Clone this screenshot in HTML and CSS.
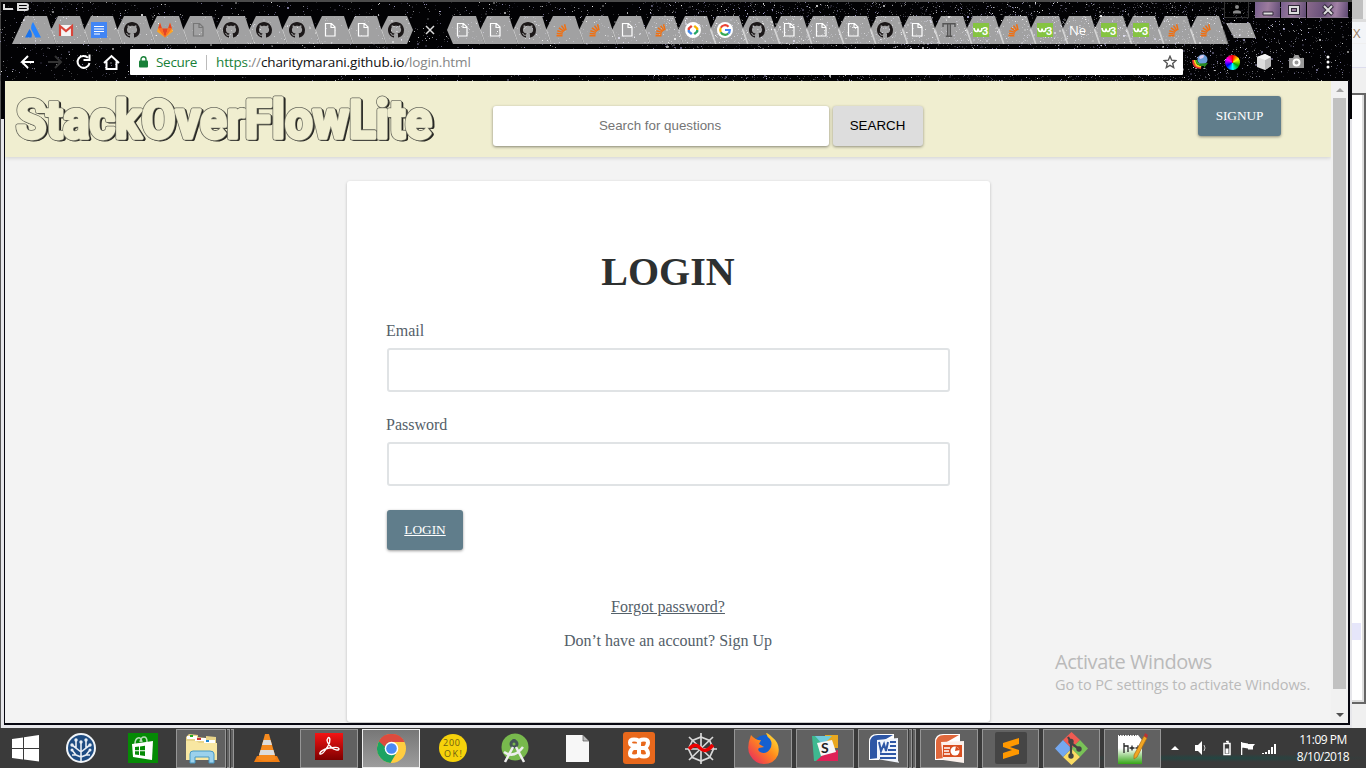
FILE: index.html
```html
<!DOCTYPE html>
<html lang="en">
<head>
<meta charset="utf-8">
<title>StackOverFlowLite - Login</title>
<link rel="stylesheet" href="styles.css">
</head>
<body>
<svg class="symbols" aria-hidden="true">
  <symbol id="github" viewBox="0 0 16 16"><path d="M8 0C3.58 0 0 3.58 0 8c0 3.54 2.29 6.53 5.47 7.59.4.07.55-.17.55-.38 0-.19-.01-.82-.01-1.49-2.01.37-2.53-.49-2.69-.94-.09-.23-.48-.94-.82-1.13-.28-.15-.68-.52-.01-.53.63-.01 1.08.58 1.23.82.72 1.21 1.87.87 2.33.66.07-.52.28-.87.51-1.07-1.78-.2-3.64-.89-3.64-3.95 0-.87.31-1.59.82-2.15-.08-.2-.36-1.02.08-2.12 0 0 .67-.21 2.2.82.64-.18 1.32-.27 2-.27s1.36.09 2 .27c1.53-1.04 2.2-.82 2.2-.82.44 1.1.16 1.92.08 2.12.51.56.82 1.27.82 2.15 0 3.07-1.87 3.75-3.65 3.95.29.25.54.73.54 1.48 0 1.07-.01 1.93-.01 2.2 0 .21.15.46.55.38A8.01 8.01 0 0 0 16 8c0-4.42-3.58-8-8-8z" fill="#1c1819"/></symbol>
  <symbol id="file" viewBox="0 0 16 16"><path d="M3.500 1.500h6l3.500 3.500v9h-9.500zM9 1.500v4h4" fill="none" stroke="#fff" stroke-width="1.200"/></symbol>
  <symbol id="filedark" viewBox="0 0 16 16"><path d="M3.500 1.500h6l3.500 3.500v9h-9.500zM9 1.500v4h4" fill="none" stroke="#777" stroke-width="1.200"/></symbol>
  <symbol id="so" viewBox="0 0 16 16"><path d="M3.500 13.800h6M3.700 11.400l6 .5M4.300 8.700l5.700 1.700M5.900 5.800l5 3.500M8.500 3.600l3.500 5M11.600 2.300l1.400 5.800" fill="none" stroke="#f07012" stroke-width="1.500"/></symbol>
  <symbol id="w3" viewBox="0 0 16 16"><rect y="1" width="16" height="14" fill="#85c441"/><path d="M1 6q.5 3.500 2.300 3.500T5 6.500q.2 3 2 3T9 6" fill="none" stroke="#fff" stroke-width="1.700"/></symbol>
  <symbol id="atlassian" viewBox="0 0 16 16"><path d="M4.500 7 0 15.500h6.500q1.500-4-2-8.500z" fill="#1872ec"/><path d="M8 0q-4 6 .3 11l2.200 4.500H16z" fill="#2684ff"/></symbol>
  <symbol id="gmail" viewBox="0 0 16 16"><path fill="#f5f5f5" d="M1 3h14v11H1z"/><path d="M2 14V4l6 5 6-5v10" fill="none" stroke="#d9453a" stroke-width="2.200"/></symbol>
  <symbol id="docs" viewBox="0 0 16 16"><path fill="#4285f4" d="M0 0h16v16H0z"/><path d="M3 4.500h10M3 7h10M3 9.500h10M3 12h6" stroke="#fff" stroke-width="1.200"/></symbol>
  <symbol id="gitlab" viewBox="0 0 16 16"><path fill="#fca326" d="m8 15.500-8-6 3-8.700 2 6h6l2-6 3 8.700z"/><path fill="#e24329" d="m8 15.500-3-9h6zM1 6.500 3 .8l2 5.700zM11 6.500l2-5.700 2 5.700z"/><path fill="#fc6d26" d="M1 6.500h4l3 9zM11 6.500h4l-7 9z"/></symbol>
  <symbol id="code" viewBox="0 0 16 16"><circle cx="8" cy="8" r="8" fill="#fff"/><g fill="none" stroke-width="2.300"><path d="M6.800 3.800 3.800 6.500V8" stroke="#e84436"/><path d="M3.800 8v1.500l3 2.700" stroke="#4387e8"/><path d="M9.200 3.800l3 2.700V8" stroke="#f4b400"/><path d="M12.200 8v1.500l-3 2.700" stroke="#24a765"/></g></symbol>
  <symbol id="google" viewBox="0 0 16 16"><circle cx="8" cy="8" r="8" fill="#fff"/><g fill="none" stroke-width="2.200"><path d="M11.500 4.700A4.800 4.800 0 0 0 3.800 5.800" stroke="#ea4335"/><path d="M3.800 5.800a4.800 4.800 0 0 0 0 4.400" stroke="#fbbc05"/><path d="M3.800 10.200a4.800 4.800 0 0 0 7.500 1.300" stroke="#34a853"/><path d="M11.300 11.500Q12.800 10.300 12.800 8H8" stroke="#4285f4"/></g></symbol>
  <symbol id="tee" viewBox="0 0 16 16"><path d="M2 5V1.800h12V5M6.700 2v12M9.300 2v12M4.800 14.200h6.400" fill="none" stroke="#555" stroke-width="1.400"/></symbol>
</svg>

<main class="desktop">
  <section class="window">
    <header class="chrome">
      <svg class="stars" id="stars" width="1352" height="79"></svg>
      <div class="caption">
        <svg class="badge" width="26" height="8" viewBox="0 0 26 8" fill="none" stroke="#ddd" stroke-width="2"><path d="M1 1v5h9M15 1h8q2 0 2 1.500T23 4h-8zm0 3h8q2 0 2 1.500T23 7h-8z"/></svg>
        <span class="user"><svg width="10" height="9"><circle cx="5" cy="2" r="2" fill="#888"/><path d="M1 8.500V6.500q4-2.500 8 0v2z" fill="#888"/></svg></span>
        <span class="wbtn"><svg width="12" height="12"><path d="M1 8h10v3H1z" fill="#ddd" stroke="#302838"/></svg></span>
        <span class="wbtn"><svg width="12" height="12"><path d="M2 3h8v6H2z" fill="none" stroke="#302838" stroke-width="4"/><path d="M2 3h8v6H2z" fill="none" stroke="#ddd" stroke-width="2"/></svg></span>
        <span class="wbtn close"><svg width="12" height="12"><path d="M1.500 1.500l9 9M10.500 1.500l-9 9" stroke="#302838" stroke-width="4"/><path d="M2 2l8 8M10 2l-8 8" stroke="#ddd" stroke-width="2"/></svg></span>
      </div>
      <nav class="tabs" id="tabs"></nav>
      <div class="toolbar">
        <svg class="navs" width="104" height="18" viewBox="0 0 104 18" fill="none" stroke="#fff" stroke-width="2">
          <path d="M16 9H4M10 3 4 9l6 6"/><path d="M30 9h13M37 3l6 6-6 6" stroke="#333"/>
          <path d="M70 4.800A6 6 0 1 0 71.500 10M71.500 1.500V7h-6"/><path d="M86 10 93.500 3l7.500 7M88.500 8.500V16h10V8.500"/>
        </svg>
        <div class="omnibox">
          <svg width="9" height="12" viewBox="0 0 9 12"><path d="M2 5V3.200a2.500 2.500 0 0 1 5 0V5" fill="none" stroke="#188038" stroke-width="1.400"/><rect y="4.500" width="9" height="7" rx="1" fill="#188038"/></svg>
          <span class="secure">Secure</span>
          <span class="url"><i class="scheme">https</i>://<b>charitymarani.github.io</b>/login.html</span>
          <svg class="fav" width="14" height="14" viewBox="0 0 14 14"><path d="M7 1.300l1.700 3.900 4.200.4-3.200 2.800 1 4.200L7 10.400l-3.700 2.200 1-4.200L1.100 5.600l4.200-.4z" fill="none" stroke="#555" stroke-width="1.400"/></svg>
        </div>
        <div class="extensions">
          <svg width="16" height="16" viewBox="0 0 16 16"><path d="M1 6q0 8 8 8" fill="none" stroke="#e33" stroke-width="1.800"/><path d="M2.700 6q0 6.500 6.500 6.500" fill="none" stroke="#fc2" stroke-width="1.800"/><path d="M4.400 6q0 4.500 5 4.500" fill="none" stroke="#3b3" stroke-width="1.800"/><circle cx="10.500" cy="5.500" r="5" fill="#6b9ed8"/><path d="M7 3q3-3 5-1.500 0 3-4 3.500z" fill="#dce"/><path d="M8 9.500l8-.5-4 5v-2H7z" fill="#2a8a20"/></svg>
          <span class="wheel"></span>
          <svg width="16" height="16" viewBox="0 0 16 16"><path d="M1 3l8-3 6 3v9l-6 4-8-3z" fill="#ddd"/><path d="M9 6l6-3v9l-6 4z" fill="#bbb"/><path d="M1 3l8-3 6 3-6 3z" fill="#f5f5f5"/></svg>
          <svg width="15" height="14" viewBox="0 0 15 14"><path d="M0 3h4l1.500-3h4L11 3h4v10H0z" fill="#999"/><circle cx="7.500" cy="7.500" r="3" fill="none" stroke="#fff" stroke-width="2"/></svg>
          <svg width="4" height="14" fill="#fff"><circle cx="2" cy="2" r="1.500"/><circle cx="2" cy="7" r="1.500"/><circle cx="2" cy="12" r="1.500"/></svg>
        </div>
      </div>
    </header>

    <div class="frame">
      <div class="viewport">
        <div class="page">
          <div class="site-header">
            <svg class="logo" width="440" height="66" role="img" aria-label="StackOverFlowLite" id="logo"></svg>
            <form class="search"><input type="text" placeholder="Search for questions"><button type="button" class="btn grey">SEARCH</button></form>
            <button class="btn signup">SIGNUP</button>
          </div>
          <div class="card">
            <h1>LOGIN</h1>
            <label>Email</label>
            <input type="text">
            <label>Password</label>
            <input type="password">
            <button class="btn login">LOGIN</button>
            <p class="forgot">Forgot password?</p>
            <p>Don’t have an account? Sign Up</p>
          </div>
        </div>
        <div class="scrollbar"><i class="up"></i><i class="thumb"></i><i class="down"></i></div>
      </div>
    </div>
    <aside class="activate"><div>Activate Windows</div><p>Go to PC settings to activate Windows.</p></aside>
  </section>
  <section class="behind">
    <div class="b-title"></div><div class="b-x">X</div><div class="b-bar"></div>
    <div class="b-pane"><i></i></div>
  </section>
</main>

<footer class="taskbar">
  <div class="start"><svg width="27" height="27" viewBox="0 0 27 27" fill="#fff"><path d="M0 4l11-1.600V13H0zM12 2.200 27 0v13H12zM0 14h11v10.500L0 23zM12 14h15v12.500L12 24.500z"/></svg></div>
  <div class="cell"><svg width="30" height="30" viewBox="0 0 30 30"><circle cx="15" cy="15" r="14" fill="#1e4c82" stroke="#f0f4f8" stroke-width="2"/><g fill="none" stroke="#e8eef4" stroke-width="1.600"><path d="M15 28V10M15 24l-5-2-4-5M15 24l5-2 4-5M15 19l-5-4V8M15 19l5-4V8M10 22H6M20 22h4M10 15l-4-3M20 15l4-3"/></g><g fill="#e8eef4"><circle cx="15" cy="9" r="1.700"/><circle cx="10" cy="7" r="1.700"/><circle cx="20" cy="7" r="1.700"/><circle cx="6" cy="12" r="1.700"/><circle cx="24" cy="12" r="1.700"/><circle cx="6" cy="17" r="1.500"/><circle cx="24" cy="17" r="1.500"/></g></svg></div>
  <div class="cell"><svg width="30" height="30" viewBox="0 0 30 30"><path fill="#058a05" d="M0 0h30v30H0z"/><path d="M7 11q0-5 3-6t4 4M12 9q1-5 4-5t3 5" fill="none" stroke="#b6dcb6" stroke-width="1.500"/><path d="M4 11l21-3-1 19-19-3z" fill="#fff"/><path d="M7 14l4-.5v3.800H7zM12 13.400l5-.6v4.500h-5zM7 18.300h4v3.800l-4-.5zM12 18.300h5v4.600l-5-.7z" fill="#058a05"/></svg></div>
  <div class="cell multi"><div class="open"><svg width="33" height="31" viewBox="0 0 33 31"><path d="M1 27V4l3-3 9 1v2l8 1V3l10 1v23z" fill="#e8d48a"/><path d="M2 3h10v3H2zM10 5h11v3H10zM19 7h11v3H19z" fill="#fff"/><path d="M5 2h3v2H5z" fill="#2a2"/><path d="M12 5h4v2h-4z" fill="#c33"/><path d="M21 7h3v2h-3z" fill="#28c"/><path d="M1 8h10l3 2h18v17H1z" fill="#f8e7a2"/><path d="M5 30v-9q0-3 3-3h17q4 0 4 3v9h-5v-6H10v6z" fill="#9bd1ec" stroke="#4799c4"/></svg></div><i></i><i></i></div>
  <div class="cell"><svg width="26" height="30" viewBox="0 0 26 30"><path d="M3 23h20l3 6H0z" fill="#f07d12"/><path d="M11 1h4l7 25q-9 4-18 0z" fill="#f58a1f"/><path d="M9.500 7h7l1.500 5H8zM6.500 17h13l1.400 5H5z" fill="#ddd"/></svg></div>
  <div class="cell open"><svg class="up3" width="28" height="27" viewBox="0 0 28 27"><defs><linearGradient id="rd" x2="0" y2="1"><stop stop-color="#f41414"/><stop offset="1" stop-color="#7d0000"/></linearGradient></defs><path fill="url(#rd)" d="M0 0h28v27H0z"/><path d="M5 21c-1-2 4-5 9-6s10-1 10 1-5 1-8-2-5-7-3-9 3 3 0 8-6 9-8 8z" fill="none" stroke="#fff" stroke-width="1.400"/></svg></div>
  <div class="cell open active"><svg width="29" height="29" viewBox="0 0 30 30"><circle cx="15" cy="15" r="15" fill="#ffcd41"/><path d="M15 15 2 7.500A15 15 0 0 1 28.300 8.200H15z" fill="#dd4b3e"/><path d="M2 7.500A15 15 0 0 0 14 30l6.500-11L15 15z" fill="#1da362"/><path d="M2 7.500 9 19 15 15V8z" fill="#1da362"/><path d="M2 7.500A15 15 0 0 1 28.300 8.200H15q-5 0-7 5z" fill="#dd4b3e"/><circle cx="15" cy="15" r="7" fill="#fff"/><circle cx="15" cy="15" r="5.500" fill="#4a8af4"/></svg></div>
  <div class="cell"><svg width="28" height="28" viewBox="0 0 28 28"><circle cx="14" cy="14" r="14" fill="#f6d20b"/><text x="4" y="11.500" class="ok" textLength="17">200</text><text x="5" y="22.500" class="ok" textLength="18">OK!</text></svg></div>
  <div class="cell"><svg width="28" height="30" viewBox="0 0 28 30"><circle cx="14" cy="14" r="13.500" fill="#78b94d"/><circle cx="13" cy="11" r="3" fill="none" stroke="#455" stroke-width="3"/><path d="M13 6v3" stroke="#455" stroke-width="3"/><path d="M12 14 4 29M15 14l8 15" stroke="#eee" stroke-width="2.500"/><path d="M3 19q10 7 19-5" fill="none" stroke="#eee" stroke-width="2.500"/></svg></div>
  <div class="cell"><svg width="23" height="27" viewBox="0 0 23 27"><path d="M0 0h17l6 6v21H0z" fill="#f7f7f7"/><path d="M17 0l6 6h-6z" fill="#bbb" stroke="#555" stroke-width=".7"/></svg></div>
  <div class="cell"><svg width="32" height="32" viewBox="0 0 32 32"><rect width="32" height="32" rx="3" fill="#e8681c"/><path d="M13 13.500h-2q-4 0-4-3t4-3q5 0 5 3v4h0v-4q0-3 5-3 4 0 4 3t-3 5.500q3 2.500 3 5.500t-4 3q-5 0-5-3v-4 4q0 3-5 3-4 0-4-3t3-5.500z" fill="none" stroke="#fff" stroke-width="4"/><path d="M11 16h10" stroke="#fff" stroke-width="4"/></svg></div>
  <div class="cell"><svg width="34" height="33" viewBox="0 0 34 33"><g fill="none" stroke="#d8d8d8" stroke-width="1.700"><path d="M17 1v31M5 5l24 23M29 5 5 28M1 17h32"/><path d="M17 5l8.500 3.500 4 8.500-4 8.500L17 29l-8.500-3.500L4.500 17l4-8.500z"/></g><path d="M5 17q6-7 11-1t13-3" fill="none" stroke="#e00" stroke-width="3.500"/></svg></div>
  <div class="cell open"><svg width="31" height="31" viewBox="0 0 31 31"><defs><linearGradient id="ff" x1="1" y1="0" x2="0" y2="1"><stop stop-color="#fff13a"/><stop offset=".45" stop-color="#ff8a1c"/><stop offset="1" stop-color="#e6196a"/></linearGradient></defs><circle cx="17" cy="14" r="12" fill="#1560d0"/><path d="M3 2q-5 13-1 20 5 9 14 9 10 0 14-9 3-11-6-18-4-4-6-4 1 4 4 6 3 5 0 10-4 6-10 3-3-2-1-4l5-1-5-3 2-4Q8 8 3 2z" fill="url(#ff)"/></svg></div>
  <div class="cell open"><svg width="27" height="26" viewBox="0 0 27 26"><path fill="#3eb890" d="M0 1h13v25H2z"/><path fill="#e9a820" d="M13 0h13v13H13z"/><path fill="#70cadb" d="M3 1h17l-9 9z"/><path fill="#df2257" d="M4 26h22V15l-13 3z"/><path fill="#f7f7f7" d="M5 8l15-3 4 12-15 4z"/><text x="9" y="18" class="slack">S</text></svg></div>
  <div class="cell multi"><div class="open"><svg width="31" height="31" viewBox="0 0 31 31"><path d="M1 27V9q0-8 8-8h17v8H11v18z" fill="#fff"/><path d="M2 26V10q0-8 8-8h15L11 10v15z" fill="#2d56a5"/><path d="M9 7l21-2v23l2 2-23-4z" fill="#f1f5fc"/><path d="M11 9l2 9 3-7 2 7 2-9M22 9h6M22 13h6M20 17h8M12 21h16M12 25h16" fill="none" stroke="#2d56a5" stroke-width="2"/></svg></div><i></i><i></i></div>
  <div class="cell open"><svg width="31" height="31" viewBox="0 0 31 31"><path d="M1 27V9q0-8 8-8h17v8H11v18z" fill="#fff"/><path d="M2 26V10q0-8 8-8h15L11 10v15z" fill="#e0683c"/><path d="M7 9l23-1v22l-21-3z" fill="#fcf1ec"/><path d="M9 12h19v12H9z" fill="#d94f20"/><circle cx="21" cy="18" r="4.500" fill="#fff"/><path d="M10 15h6M10 18h5M10 21h6" stroke="#fff" stroke-width="1.500"/><path d="M21 18l1-5 4 4z" fill="#d94f20"/></svg></div>
  <div class="cell open"><svg width="32" height="32" viewBox="0 0 32 32"><rect width="32" height="32" rx="2" fill="#454545"/><path d="M8 11l16-5v6l-9 3 9 3v4L8 27v-6l9-3-9-3z" fill="#ff9800"/></svg></div>
  <div class="cell open"><svg width="33" height="33" viewBox="0 0 33 33"><path d="M16.500 0 25 8l-8.500 8.500L8 8z" fill="#f05b52"/><path d="M33 16.500 25 25l-8.500-8.500L25 8z" fill="#79c257"/><path d="M16.500 33 8 25l8.500-8.500L25 25z" fill="#fbdc63"/><path d="M0 16.500 8 8l8.500 8.500L8 25z" fill="#74a8f0"/><path d="M13 5l3 5v15M16 11l8 6" stroke="#444" stroke-width="2.200" fill="none"/><circle cx="16" cy="9.500" r="2.700" fill="#444"/><circle cx="16" cy="24" r="2.700" fill="#444"/><circle cx="24" cy="17" r="2.700" fill="#444"/></svg></div>
  <div class="cell open"><svg width="31" height="31" viewBox="0 0 31 31"><defs><linearGradient id="np" x2="0" y2="1"><stop offset=".45" stop-color="#fff"/><stop offset="1" stop-color="#35a516"/></linearGradient></defs><path fill="url(#np)" d="M1 2h20l4 5v24H1z"/><path d="M2 2h18" stroke="#555" stroke-width="2" stroke-dasharray="1 1.500"/><path d="M7 20V10M7 13h4v6M12.500 15h5M15 12.500v5M18.500 15h5M21 12.500v5" fill="none" stroke="#222" stroke-width="1.300"/><path d="M27 3l3 2-10 19-3 2v-4z" fill="#f2a623" stroke="#a96c13" stroke-width=".7"/><path d="M28 0l3 2-1 3-3-2z" fill="#b33"/></svg></div>
  <svg class="tray" width="106" height="16" viewBox="0 0 106 16" fill="#fff"><path d="M0 10l4-4 4 4z"/><path d="M24 5h3l4-4v14l-4-4h-3z"/><path d="M33 5q2 3 0 6" fill="none" stroke="#ccc"/><path d="M53 3.500h6v11h-6zM55 1.500h2v2" fill="none" stroke="#fff" stroke-width="1.500"/><path d="M54.500 8.500h3v5h-3z"/><path d="M70 2h1.300v13H70zM71 2.500l6 1v5l-6-1zM77 4h7l-2 2.500v3h-5z"/><path d="M91 13h2v1h-2zM94 12h2v2h-2zM97 10h2v4h-2zM100 7h2v7h-2zM103 4h2v10h-2z"/></svg>
  <div class="clock"><span>11:09 PM</span><span>8/10/2018</span></div>
</footer>
<script src="main.js"></script>
</body>
</html>
```
FILE: styles.css
```css
* { box-sizing: border-box; }
body { margin: 0; width: 1366px; height: 768px; overflow: hidden; background: #3a3a3a; font-family: "Liberation Serif", serif; }
.symbols { position: absolute; width: 0; height: 0; }
.desktop { display: flex; height: 728px; }
.window { position: relative; width: 1352px; height: 728px; display: flex; flex-direction: column; }

/* browser chrome */
.chrome { position: relative; height: 81px; background: #020204; border-top: 2px solid #4b4b4b; border-left: 1px solid #444; display: flex; flex-direction: column; }
.stars { position: absolute; left: -1px; top: 0; }
.caption { position: relative; height: 14px; display: flex; align-items: flex-start; padding-left: 2px; padding-right: 4px; }
.badge { margin: 1px auto 0 0; }
.user { width: 25px; height: 16px; margin-right: 6px; border: 1px solid #333; border-top: 0; display: flex; align-items: center; justify-content: center; background: rgba(0, 0, 0, .6); }
.wbtn { width: 25px; height: 16px; margin-right: 1px; background: linear-gradient(100deg, #78608e, #9c7b9d 50%, #604c75); display: flex; align-items: center; justify-content: center; border-bottom: 1px solid #8a7790; }
.wbtn.close { width: 41px; margin-right: 0; background: linear-gradient(100deg, #8a6a8c, #6a527b 40%, #a281a6 70%, #5b4770); }
.tabs { position: relative; height: 28px; padding-left: 15px; display: flex; }
.tab { flex: none; height: 28px; display: flex; justify-content: center; position: relative; }
.tab svg { overflow: visible; flex: none; width: 32px; height: 28px; }
.tab .shape { fill: rgba(255, 255, 255, .63); }
.tab .edge { fill: none; stroke: #777; stroke-width: 1; }
.w3-digit { font: bold 11px Roboto, sans-serif; fill: #fff; }
.ne { font: 13px "Open Sans", sans-serif; fill: #fff; }
.toolbar { position: relative; height: 37px; padding: 5px 14px 6px 17px; display: flex; align-items: center; }
.navs { margin-right: 8px; flex: none; }
.omnibox { flex: none; width: 1053px; height: 26px; background: #fff; border-radius: 1px; display: flex; align-items: center; padding: 0 6px 0 9px; font: 13.500px "Open Sans", sans-serif; }
.secure { color: #188038; margin-left: 8px; padding-right: 8px; line-height: 15px; border-right: 1px solid #bbb; width: 51px; letter-spacing: -.3px; }
.url { margin-left: 9px; color: #858585; letter-spacing: -.14px; white-space: nowrap; }
.url b { font-weight: normal; color: #111; }
.scheme { font-style: normal; color: #188038; }
.fav { margin-left: auto; }
.extensions { display: grid; grid-template-columns: repeat(5, 32px); justify-items: center; align-items: center; margin-left: 1px; }
.wheel { width: 15px; height: 15px; border-radius: 50%; background: conic-gradient(red, #ff0 , #0a0 , #0ff , #00f , #f0f , red); }

/* window frame */
.frame { flex: 1; min-height: 0; padding: 0 2px 3px 3px; background: linear-gradient(#020204, #020204) 0 0 / 100% 38px no-repeat, #e6e6ea; border-left: 1px solid #555; }
.viewport { height: 644px; display: flex; border: solid #070710; border-width: 0 2px 2px 1px; background: #f3f3f3; }
.page { flex: 1; min-width: 0; height: 642px; overflow: hidden; }
.site-header { height: 76px; background: #f0eed0; box-shadow: 0 1px 4px rgba(0, 0, 0, .15); display: flex; align-items: flex-start; }
.logo { flex: none; overflow: visible; font: bold 54px Roboto, sans-serif; stroke-linejoin: round; }
.logo .rim { fill: #66675c; stroke: #66675c; stroke-width: 5; }
.logo .shade { fill: #262622; stroke: #262622; stroke-width: 4; }
.logo .face { fill: #f0eed0; stroke: #f0eed0; stroke-width: 3.4; }
.search { display: flex; gap: 4px; margin: 25px 0 0 48px; }
.search input { width: 336px; height: 40px; border: 0; border-radius: 3px; text-align: center; font: 13.333px "Liberation Sans", sans-serif; box-shadow: 0 1px 3px rgba(0, 0, 0, .45); padding: 0 2px 2px 0; }
.search input::placeholder { color: #757575; }
.btn { height: 40px; border: 0; border-radius: 3px; background: #607d8b; color: #fff; font: 13.333px "Liberation Serif", serif; box-shadow: 0 1px 3px rgba(0, 0, 0, .4); padding: 0; display: block; }
.btn.grey { width: 90px; padding: 0 1px 2px 0; background: #ddd; color: #000; font-family: "Liberation Sans", sans-serif; }
.signup { width: 83px; margin: 15px 50px 0 auto; letter-spacing: -.1px; }
.card { width: 643px; height: 541px; margin: 24px auto 0 342px; padding: 68px 40px 0; background: #fff; border-radius: 3px; box-shadow: 0 1px 3px rgba(0, 0, 0, .25); color: #546069; font-size: 16px; }
.card h1 { margin: 0 1px 27px 0; font-size: 40px; line-height: 46px; text-align: center; color: #2d3030; }
.card label { display: block; line-height: 18px; margin-bottom: 8px; margin-left: -1px; }
.card input { display: block; width: 563px; height: 44px; border: 2px solid #e0e3e5; border-radius: 3px; margin-bottom: 24px; background: #fff; }
.login { width: 76px; text-decoration: underline; margin-bottom: 48px; }
.card p { margin: 0 1px 16px 0; line-height: 18px; text-align: center; }
.card .forgot { text-decoration: underline; }
.scrollbar { width: 17px; background: #f1f1f1; display: flex; flex-direction: column; align-items: center; padding: 7px 0 6px; }
.scrollbar .up { border: 4px solid transparent; border-top: 0; border-bottom-color: #a3a3a3; margin-bottom: 6px; }
.thumb { width: 13px; height: 591px; background: #c1c1c1; }
.down { margin-top: auto; border: 4px solid transparent; border-bottom: 0; border-top-color: #505050; }
.activate { position: absolute; left: 1055px; top: 648px; color: #bababa; font-family: "Open Sans", sans-serif; white-space: nowrap; }
.activate div { font-size: 20px; line-height: 28px; letter-spacing: -.45px; }
.activate p { margin: 0; font-size: 14.500px; line-height: 18px; letter-spacing: -.08px; }

/* window behind */
.behind { width: 14px; display: flex; flex-direction: column; background: #f0f0f0; overflow: hidden; }
.b-title { height: 19px; background: #c0c0c0; border-right: 3px solid #eee; }
.b-x { height: 24px; padding-left: 1px; margin-bottom: 1px; background: #f3f5f8; border-top: 3px solid #ddd; font: 13px/22px "Open Sans", sans-serif; color: #998066; }
.b-bar { height: 24px; background: #f3f5f8; border-bottom: 1px solid #dde; margin-bottom: 25px; }
.b-pane { height: 611px; background: #fff; border: solid #666; border-width: 2px 2px 2px 0; box-shadow: inset -2px -2px #ddd; padding-top: 528px; }
.b-pane i { display: block; width: 9px; height: 17px; background: #e6e6fa; }

/* taskbar */
.taskbar { height: 40px; display: flex; align-items: center; gap: 4px; background: radial-gradient(ellipse at 1220px 30px, rgba(25, 75, 70, .7), transparent 160px), #3a3a3a; }
.taskbar svg { flex: none; }
.start { width: 48px; padding-left: 12px; display: flex; }
.cell { width: 58px; height: 39px; flex: none; display: flex; align-items: center; justify-content: center; }
.cell:nth-last-child(-n+5) { width: 57px; }
.open { background: #616161; border: 1px solid #969696; }
.open.active { background: linear-gradient(#777, #9c9c9c); border-color: #eee; }
.up3 { margin-bottom: 4px; }
.cell.multi { gap: 1px; justify-content: flex-start; }
.multi .open { width: 50px; height: 39px; display: flex; align-items: center; justify-content: center; }
.multi i { width: 3px; height: 39px; background: #616161; border: 1px solid #969696; border-left: 0; }
.ok { font: 9px/9px "Open Sans", sans-serif; fill: #6d6010; }
.slack { font: bold 14px Lato, sans-serif; fill: #222; }
.tray { margin-left: 6px; }
.clock { margin-left: 10px; width: 64px; display: flex; flex-direction: column; align-items: center; color: #fff; font: 12px/17px "Open Sans", sans-serif; letter-spacing: -.5px; white-space: nowrap; }
```
FILE: main.js
```js
// Night-sky theme: small seeded specks, denser toward the right.
let seed = 7;
const rnd = () => (seed = (seed * 16807) % 2147483647) / 2147483647;
let sky = "";
for (let i = 0; i < 9500; i++) {
  const x = rnd() * 1352, y = rnd() * 79;
  const density = x < 300 ? 0.3 : x < 650 ? 0.35 : x < 1250 ? 1 : 0.6;
  if (rnd() > density) continue;
  const size = rnd() > 0.96 ? 2 : 1;
  const alpha = (0.12 + rnd() * rnd() * 0.88).toFixed(2);
  const tint = rnd() > 0.5 ? "#fff" : "#b9b4e6";
  sky += `<rect x="${x | 0}" y="${y | 0}" width="${size}" height="${size}" fill="${tint}" opacity="${alpha}"/>`;
}
document.getElementById("stars").innerHTML = sky;

// Wordmark: each layer is the same line of text, stacked as shade, rim and face.
const word = (cls, dx, dy) =>
  `<text class="${cls}" x="${11 + dx}" y="${56.5 + dy}" textLength="416" lengthAdjust="spacingAndGlyphs">StackOverFlowLite</text>`;
document.getElementById("logo").innerHTML = word("shade", 1.8, 1.8) + word("rim", 0, 0) + word("face", 0, 0);

const tabs = ("atlassian gmail docs github gitlab filedark github github github file file github " +
  "active file file github so so file so code google github file file file github file tee " +
  "w3 so w3 ne w3 w3 so so new").split(" ");

const html = tabs.map((name, i) => {
  const width = i < 21 ? 33 : 32;
  let body;
  if (name === "active") {
    body = '<path d="M13 10l8 8M21 10l-8 8" stroke="#ddd" stroke-width="1.500"/>';
  } else if (name === "new") {
    body = '<path class="shape" d="M5 7h24l6 15H13z"/>';
  } else {
    const first = i === 0, afterGap = tabs[i - 1] === "active", beforeGap = tabs[i + 1] === "active";
    const left = first ? "M-5 28L8 0" : afterGap ? "M7 28L1 14L7 0" : "M6 28L1 14L8 0";
    const right = beforeGap ? "H27L33 14L27 28" : "H30L39 28";
    body = `<path class="shape" d="${left}${right}z"/>` +
      (beforeGap ? "" : '<path class="edge" d="M34.500 14L39 28"/>');
    body += name === "ne"
      ? '<text x="8" y="19" class="ne">Ne</text>'
      : `<use href="#${name}" x="8" y="6" width="16" height="16"/>`;
    if (name === "w3") body += '<text x="17" y="18.500" class="w3-digit">3</text>';
  }
  return `<div class="tab" style="width:${width}px"><svg viewBox="0 0 32 28">${body}</svg></div>`;
}).join("");
document.getElementById("tabs").innerHTML = html;
```
